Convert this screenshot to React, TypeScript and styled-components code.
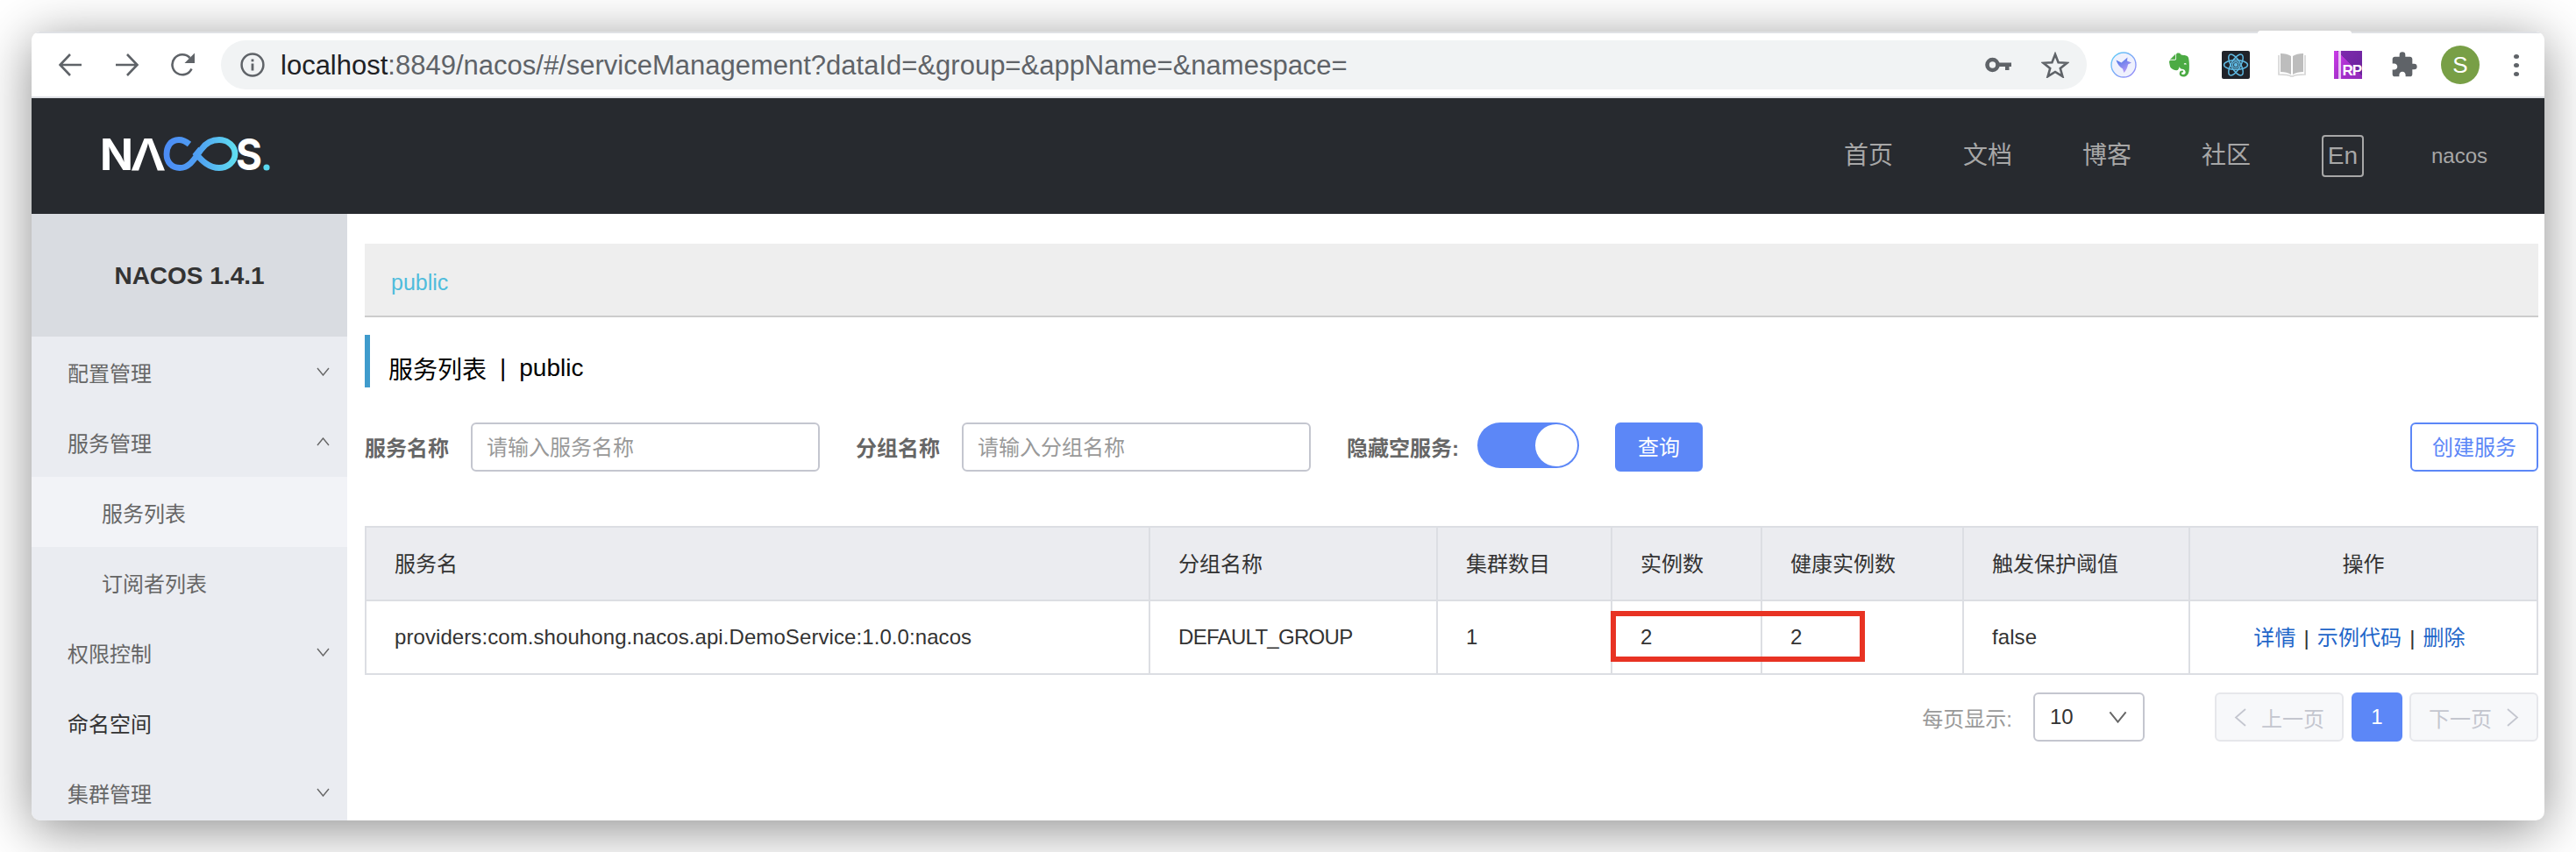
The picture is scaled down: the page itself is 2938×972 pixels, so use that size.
import styled, { createGlobalStyle } from "styled-components";
import { MdExtension } from "react-icons/md";
import { SiEvernote } from "react-icons/si";

const GlobalStyle = createGlobalStyle`
  html, body {
    margin: 0;
    padding: 0;
    background: #fff;
    overflow: hidden;
  }
  * {
    box-sizing: border-box;
  }
`;

const FONT = `"Liberation Sans", "Noto Sans CJK SC", sans-serif`;

const Page = styled.div`
  width: 2938px;
  height: 972px;
  padding: 36px;
  font-family: ${FONT};
  font-size: 24px;
  color: #333;
`;

const Window = styled.div`
  position: relative;
  height: 900px;
  display: flex;
  flex-direction: column;
  background: #fff;
  border-radius: 10px;
  box-shadow: 0 10px 60px rgba(0, 0, 0, 0.45);
`;

const WindowInner = styled.div`
  display: flex;
  flex-direction: column;
  height: 100%;
  border-radius: 10px;
  overflow: hidden;
`;

/* browser chrome */
const BrowserBar = styled.div`
  flex: none;
  height: 76px;
  display: flex;
  align-items: center;
  background: #fff;
  border-top: 2px solid #dfe1e5;
  border-bottom: 2px solid #dfe1e5;
  padding-left: 31px;
`;

const TopNotch = styled.div`
  position: absolute;
  top: -1px;
  left: 2539px;
  width: 107px;
  height: 3px;
  background: #fff;
  border-radius: 3px 3px 0 0;
`;

const NavIcon = styled.svg`
  flex: none;
  width: 28px;
  height: 28px;
  margin-right: 36px;
  fill: none;
  stroke: #5f6368;
  stroke-width: 2.6;
`;

const UrlPill = styled.div`
  flex: none;
  width: 2128px;
  height: 56px;
  margin-left: -7px;
  display: flex;
  align-items: center;
  background: #f1f3f4;
  border-radius: 28px;
  padding: 0 20px 0 22px;
`;

const UrlIcon = styled.svg`
  flex: none;
  width: 28px;
  height: 28px;
  margin-right: 18px;
`;

const UrlText = styled.div`
  flex: 1;
  font-size: 31px;
  color: #5f6368;
  white-space: nowrap;
  padding-top: 2px;
  b {
    font-weight: 400;
    color: #202124;
  }
`;

const KeyIcon = styled.svg`
  flex: none;
  width: 30px;
  height: 18px;
  margin-right: 34px;
`;

const StarIcon = styled.svg`
  flex: none;
  width: 32px;
  height: 30px;
`;

const ExtRow = styled.div`
  flex: 1;
  display: flex;
  align-items: center;
  padding-left: 27px;
`;

const ExtSlot = styled.div<{ $w?: number; $mr?: number }>`
  flex: none;
  width: ${(p) => p.$w ?? 32}px;
  height: 32px;
  margin-right: ${(p) => p.$mr ?? 32}px;
  display: flex;
  align-items: center;
  justify-content: center;
`;

const ReactTile = styled.svg`
  flex: none;
  width: 32px;
  height: 32px;
  border-radius: 2px;
  background: #20232a;
`;

const AxureTile = styled.div`
  position: relative;
  width: 32px;
  height: 32px;
  background:
    linear-gradient(45deg, transparent 55%, rgba(70, 30, 130, 0.55) 55%),
    linear-gradient(135deg, #c93be6 0%, #a52fca 60%, #8f2ab8 100%);
  color: #fff;
  font-size: 17px;
  font-weight: 700;
  letter-spacing: -1px;
  display: flex;
  align-items: flex-end;
  justify-content: flex-end;
  padding: 0 1px 1px 0;
  line-height: 16px;
  &::before {
    content: "";
    position: absolute;
    left: 5px;
    top: 0;
    bottom: 0;
    width: 3px;
    background: #e9c6f2;
  }
`;

const Avatar = styled.div`
  flex: none;
  width: 44px;
  height: 44px;
  border-radius: 50%;
  background: #789f46;
  color: #fff;
  font-size: 26px;
  display: flex;
  align-items: center;
  justify-content: center;
  margin-right: 39px;
`;

const MoreDots = styled.div`
  flex: none;
  display: flex;
  flex-direction: column;
  gap: 5px;
  i {
    display: block;
    width: 6px;
    height: 5px;
    border-radius: 50%;
    background: #5f6368;
  }
`;

/* nacos top nav */
const TopHeader = styled.div`
  flex: none;
  height: 132px;
  display: flex;
  align-items: center;
  background: #272a2f;
  padding-left: 72px;
`;

const LogoSvg = styled.svg`
  flex: none;
  width: 208px;
  height: 72px;
  margin-top: -4px;
`;

const TopNav = styled.div`
  margin-left: auto;
  display: flex;
  align-items: center;
  color: #a7a7a7;
  font-size: 28px;
  padding-right: 65px;
`;

const TopLink = styled.span`
  margin-right: 80px;
  line-height: 40px;
`;

const LangBox = styled.span`
  width: 48px;
  height: 48px;
  border: 2px solid #a7a7a7;
  border-radius: 4px;
  display: flex;
  align-items: center;
  justify-content: center;
  margin-right: 77px;
  margin-left: 1px;
`;

const UserName = styled.span`
  font-size: 24px;
`;

/* page body */
const Body = styled.div`
  flex: 1;
  min-height: 0;
  display: flex;
`;

const Sidebar = styled.div`
  flex: none;
  width: 360px;
  background: #eaecf1;
  overflow: hidden;
`;

const SidebarTitle = styled.div`
  height: 140px;
  background: #d9dce1;
  display: flex;
  align-items: center;
  justify-content: center;
  padding-top: 2px;
  font-size: 28px;
  font-weight: 700;
  color: #333;
`;

const MenuItem = styled.div<{ $sub?: boolean; $active?: boolean; $dark?: boolean }>`
  height: 80px;
  flex: none;
  display: flex;
  align-items: center;
  justify-content: space-between;
  padding-left: ${(p) => (p.$sub ? 80 : 41)}px;
  padding-right: 20px;
  background: ${(p) => (p.$active ? "#f2f3f7" : "transparent")};
  color: ${(p) => (p.$dark ? "#333" : "#666")};
`;

const Chevron = styled.svg<{ $w?: number; $h?: number; $sw?: number }>`
  flex: none;
  width: ${(p) => p.$w ?? 15}px;
  height: ${(p) => p.$h ?? 10}px;
  fill: none;
  stroke: ${(p) => p.color ?? "#666"};
  stroke-width: ${(p) => p.$sw ?? 1.4};
`;

const Content = styled.div`
  flex: 1;
  min-width: 0;
  padding: 34px 7px 0 20px;
`;

const Breadcrumb = styled.div`
  height: 84px;
  background: #eee;
  border-bottom: 2px solid #ccc;
  display: flex;
  align-items: center;
  padding: 6px 0 0 30px;
  color: #4fbcdc;
  font-size: 25px;
`;

const PageTitle = styled.div`
  margin-top: 20px;
  height: 60px;
  border-left: 6px solid #3f9bcc;
  display: flex;
  align-items: center;
  padding: 16px 0 0 21px;
  color: #000;
  font-size: 28px;
  span {
    margin: 0 15px;
  }
`;

const FilterRow = styled.div`
  margin-top: 40px;
  height: 56px;
  display: flex;
  align-items: center;
`;

const FilterLabel = styled.label<{ $gap?: number }>`
  flex: none;
  font-weight: 700;
  color: #666;
  padding-bottom: 2px;
  margin-right: ${(p) => p.$gap ?? 25}px;
`;

const SearchInput = styled.div`
  flex: none;
  width: 398px;
  height: 56px;
  margin-right: 41px;
  border: 2px solid #c4c6cf;
  border-radius: 6px;
  display: flex;
  align-items: center;
  padding: 0 0 4px 16px;
  color: #999;
`;

const Toggle = styled.div`
  flex: none;
  width: 116px;
  height: 52px;
  margin: -4px 41px 0 0;
  border-radius: 26px;
  background: #5c87f7;
  display: flex;
  justify-content: flex-end;
  padding: 2px;
  i {
    display: block;
    width: 48px;
    height: 48px;
    border-radius: 50%;
    background: #fff;
  }
`;

const Button = styled.button<{ $outline?: boolean }>`
  flex: none;
  height: 56px;
  width: ${(p) => (p.$outline ? 146 : 100)}px;
  margin-left: ${(p) => (p.$outline ? "auto" : 0)};
  border: 2px solid #5c87f7;
  border-radius: 6px;
  background: ${(p) => (p.$outline ? "#fff" : "#5c87f7")};
  color: ${(p) => (p.$outline ? "#5c87f7" : "#fff")};
  font-family: ${FONT};
  font-size: 24px;
  padding: 0 0 3px;
`;

const TableWrap = styled.div`
  position: relative;
  margin-top: 62px;
`;

const Table = styled.table`
  width: 2479px;
  table-layout: fixed;
  border-collapse: separate;
  border-spacing: 0;
  border-top: 2px solid #dcdee3;
  border-left: 2px solid #dcdee3;
`;

const Th = styled.th<{ $center?: boolean }>`
  height: 84px;
  background: #ebecf0;
  border-right: 2px solid #dcdee3;
  border-bottom: 2px solid #dcdee3;
  padding: 0 0 3px ${(p) => (p.$center ? 0 : 32)}px;
  font-weight: 400;
  text-align: ${(p) => (p.$center ? "center" : "left")};
  color: #333;
`;

const Td = styled.td<{ $center?: boolean }>`
  height: 84px;
  background: #fff;
  border-right: 2px solid #dcdee3;
  border-bottom: 2px solid #dcdee3;
  padding: ${(p) => (p.$center ? "0 9px 4px 0" : "0 0 0 32px")};
  text-align: ${(p) => (p.$center ? "center" : "left")};
  white-space: nowrap;
  letter-spacing: 0.08px;
  color: #333;
`;

const GroupCell = styled(Td)`
  letter-spacing: -0.7px;
`;

const ActionLink = styled.a`
  color: #1f66c9;
`;

const ActionSep = styled.span`
  margin: 0 9px;
`;

const Highlight = styled.div`
  position: absolute;
  left: 1421px;
  top: 97px;
  width: 290px;
  height: 58px;
  border: 6px solid #e83323;
  pointer-events: none;
`;

const Pagination = styled.div`
  margin-top: 20px;
  height: 56px;
  display: flex;
  align-items: center;
  justify-content: flex-end;
`;

const PageSizeLabel = styled.span`
  color: #999;
  margin-right: 24px;
`;

const PageSelect = styled.div`
  width: 127px;
  height: 56px;
  border: 2px solid #c4c6cf;
  border-radius: 6px;
  display: flex;
  align-items: center;
  justify-content: space-between;
  padding: 0 18px 0 17px;
  margin-right: 80px;
`;

const PagerButton = styled.div<{ $current?: boolean }>`
  height: 56px;
  width: ${(p) => (p.$current ? 58 : 147)}px;
  margin-left: ${(p) => (p.$current ? 9 : 0)}px;
  margin-right: ${(p) => (p.$current ? 8 : 0)}px;
  border: 2px solid ${(p) => (p.$current ? "#5c87f7" : "#e6e7eb")};
  border-radius: 6px;
  background: ${(p) => (p.$current ? "#5c87f7" : "#f7f8fa")};
  color: ${(p) => (p.$current ? "#fff" : "#c4c6cf")};
  display: flex;
  align-items: center;
  justify-content: center;
  gap: 17px;
`;

const down = "M1 1 L7.5 9 L14 1";
const up = "M1 9 L7.5 1 L14 9";

const NacosLogo = () => (
  <LogoSvg viewBox="-8 -16 208 72">
    <defs>
      <linearGradient id="loop" x1="0" x2="1" y1="0" y2="0">
        <stop offset="0" stopColor="#4c8cf5" />
        <stop offset="0.45" stopColor="#4f9ff2" />
        <stop offset="1" stopColor="#5fdcf0" />
      </linearGradient>
    </defs>
    <text x="-2" y="38" fontFamily="Inter" fontWeight="700" fontSize="49" fill="#fff" textLength="38" lengthAdjust="spacingAndGlyphs">
      N
    </text>
    <text x="34" y="38" fontFamily="Noto Sans" fontWeight="600" fontSize="50" fill="#fff" textLength="38" lengthAdjust="spacingAndGlyphs">
      Λ
    </text>
    <path
      d="M100 8.5 C95 4.5 91 3.5 88 3.5 C78 3.5 74 12 74 20 C74 29 80 35.5 89 35.5 C101 35.5 107 23 114 14 C119 7 126 3.5 134 3.5 C144 3.5 152 11 152 19.5 C152 28 144 35.5 134 35.5 C122 35.5 114 27 108 20 L113 14"
      fill="none"
      stroke="url(#loop)"
      strokeWidth="6.8"
      strokeLinecap="butt"
    />
    <text x="153" y="38" fontFamily="Inter" fontWeight="700" fontSize="49" fill="#fff" textLength="30" lengthAdjust="spacingAndGlyphs">
      S
    </text>
    <circle cx="188" cy="35" r="3.6" fill="#5bd8ee" />
  </LogoSvg>
);

const BirdIcon = () => (
  <svg width="30" height="30" viewBox="0 0 30 30">
    <defs>
      <linearGradient id="birdRing" x1="0" x2="1" y1="0" y2="1">
        <stop offset="0" stopColor="#5fd0f8" />
        <stop offset="1" stopColor="#9a86f7" />
      </linearGradient>
      <linearGradient id="birdBody" x1="0" x2="0.6" y1="0" y2="1">
        <stop offset="0" stopColor="#3f72e4" />
        <stop offset="1" stopColor="#b79af7" />
      </linearGradient>
    </defs>
    <circle cx="15" cy="15" r="14" fill="#eff1fd" stroke="url(#birdRing)" strokeWidth="1.4" />
    <path d="M6.5 9.5 L12.5 12.5 L19.5 6.5 L19 10.5 L24 12.5 L20 14.5 C19.5 18 18 21 15.5 24 L14 19.5 C10.5 17.5 8 14 6.5 9.5 Z" fill="url(#birdBody)" />
  </svg>
);

const ReactLogo = () => (
  <ReactTile viewBox="0 0 32 32">
    <g fill="none" stroke="#5fb9e2" strokeWidth="1.5">
      <ellipse cx="16" cy="16" rx="13.5" ry="5.4" />
      <ellipse cx="16" cy="16" rx="13.5" ry="5.4" transform="rotate(60 16 16)" />
      <ellipse cx="16" cy="16" rx="13.5" ry="5.4" transform="rotate(120 16 16)" />
      <circle cx="16" cy="16" r="3.6" />
    </g>
    <circle cx="16" cy="16" r="2.2" fill="#5fb9e2" />
  </ReactTile>
);

const BookIcon = () => (
  <svg width="32" height="28" viewBox="0 0 32 28">
    <path d="M3 1 C8 1 12 2 15 4 L15 25 C12 23 8 22 3 22 Z" fill="#bdbdbd" />
    <path d="M29 1 C24 1 20 2 17 4 L17 25 C20 23 24 22 29 22 Z" fill="#bdbdbd" />
    <path d="M1 3 V25 C7 25 12 25 15 27 H17 C20 25 25 25 31 25 V3" fill="none" stroke="#d4d4d4" strokeWidth="1.6" />
  </svg>
);

const App = () => {
  return (
    <>
      <GlobalStyle />
      <Page>
        <Window>
          <WindowInner>
            <BrowserBar>
              <NavIcon viewBox="0 0 28 28">
                <path d="M26 14 H2 M13 2 L1.5 14 L13 26" />
              </NavIcon>
              <NavIcon viewBox="0 0 28 28">
                <path d="M1 14 H25 M14 2 L25.5 14 L14 26" />
              </NavIcon>
              <NavIcon viewBox="0 0 28 28">
                <path d="M23.5 18.5 A11.5 11.5 0 1 1 21.5 6" />
                <path d="M27 0.5 V12 H15.5 Z" fill="#5f6368" stroke="none" />
              </NavIcon>
              <UrlPill>
                <UrlIcon viewBox="0 0 28 28">
                  <circle cx="14" cy="14" r="12.4" fill="none" stroke="#5f6368" strokeWidth="2.5" />
                  <rect x="12.6" y="12.5" width="2.8" height="8" fill="#5f6368" />
                  <rect x="12.6" y="7.5" width="2.8" height="2.8" fill="#5f6368" />
                </UrlIcon>
                <UrlText>
                  <b>localhost</b>:8849/nacos/#/serviceManagement?dataId=&amp;group=&amp;appName=&amp;namespace=
                </UrlText>
                <KeyIcon viewBox="0 0 30 18">
                  <circle cx="8.5" cy="9" r="6" fill="none" stroke="#5f6368" strokeWidth="4.6" />
                  <path d="M14 6.5 H30 V11 H27.5 V15 H23 V11 H14 Z" fill="#5f6368" />
                </KeyIcon>
                <StarIcon viewBox="0 0 32 30">
                  <path d="M16 3 L19.6 12.2 L29.5 12.8 L21.8 19 L24.4 28.2 L16 23 L7.6 28.2 L10.2 19 L2.5 12.8 L12.4 12.2 Z" fill="none" stroke="#5f6368" strokeWidth="2.6" />
                </StarIcon>
              </UrlPill>
              <ExtRow>
                <ExtSlot $w={30} $mr={35}>
                  <BirdIcon />
                </ExtSlot>
                <ExtSlot $w={27} $mr={35}>
                  <SiEvernote size={34} color="#4cab44" />
                </ExtSlot>
                <ExtSlot $mr={32}>
                  <ReactLogo />
                </ExtSlot>
                <ExtSlot $mr={32}>
                  <BookIcon />
                </ExtSlot>
                <ExtSlot $mr={32}>
                  <AxureTile>RP</AxureTile>
                </ExtSlot>
                <ExtSlot $mr={26}>
                  <MdExtension size={36} color="#5f6368" />
                </ExtSlot>
                <Avatar>S</Avatar>
                <MoreDots>
                  <i />
                  <i />
                  <i />
                </MoreDots>
              </ExtRow>
            </BrowserBar>
            <TopHeader>
              <NacosLogo />
              <TopNav>
                <TopLink>首页</TopLink>
                <TopLink>文档</TopLink>
                <TopLink>博客</TopLink>
                <TopLink>社区</TopLink>
                <LangBox>En</LangBox>
                <UserName>nacos</UserName>
              </TopNav>
            </TopHeader>
            <Body>
              <Sidebar>
                <SidebarTitle>NACOS 1.4.1</SidebarTitle>
                <MenuItem>
                  配置管理
                  <Chevron viewBox="0 0 15 10">
                    <path d={down} />
                  </Chevron>
                </MenuItem>
                <MenuItem>
                  服务管理
                  <Chevron viewBox="0 0 15 10">
                    <path d={up} />
                  </Chevron>
                </MenuItem>
                <MenuItem $sub $active>
                  服务列表
                </MenuItem>
                <MenuItem $sub>订阅者列表</MenuItem>
                <MenuItem>
                  权限控制
                  <Chevron viewBox="0 0 15 10">
                    <path d={down} />
                  </Chevron>
                </MenuItem>
                <MenuItem $dark>命名空间</MenuItem>
                <MenuItem>
                  集群管理
                  <Chevron viewBox="0 0 15 10">
                    <path d={down} />
                  </Chevron>
                </MenuItem>
              </Sidebar>
              <Content>
                <Breadcrumb>public</Breadcrumb>
                <PageTitle>
                  服务列表<span>|</span>public
                </PageTitle>
                <FilterRow>
                  <FilterLabel>服务名称</FilterLabel>
                  <SearchInput>请输入服务名称</SearchInput>
                  <FilterLabel>分组名称</FilterLabel>
                  <SearchInput>请输入分组名称</SearchInput>
                  <FilterLabel $gap={21}>隐藏空服务:</FilterLabel>
                  <Toggle>
                    <i />
                  </Toggle>
                  <Button>查询</Button>
                  <Button $outline>创建服务</Button>
                </FilterRow>
                <TableWrap>
                  <Table>
                    <colgroup>
                      <col style={{ width: 894 }} />
                      <col style={{ width: 328 }} />
                      <col style={{ width: 199 }} />
                      <col style={{ width: 171 }} />
                      <col style={{ width: 230 }} />
                      <col style={{ width: 258 }} />
                      <col style={{ width: 397 }} />
                    </colgroup>
                    <thead>
                      <tr>
                        <Th>服务名</Th>
                        <Th>分组名称</Th>
                        <Th>集群数目</Th>
                        <Th>实例数</Th>
                        <Th>健康实例数</Th>
                        <Th>触发保护阈值</Th>
                        <Th $center>操作</Th>
                      </tr>
                    </thead>
                    <tbody>
                      <tr>
                        <Td>providers:com.shouhong.nacos.api.DemoService:1.0.0:nacos</Td>
                        <GroupCell>DEFAULT_GROUP</GroupCell>
                        <Td>1</Td>
                        <Td>2</Td>
                        <Td>2</Td>
                        <Td>false</Td>
                        <Td $center>
                          <ActionLink>详情</ActionLink>
                          <ActionSep>|</ActionSep>
                          <ActionLink>示例代码</ActionLink>
                          <ActionSep>|</ActionSep>
                          <ActionLink>删除</ActionLink>
                        </Td>
                      </tr>
                    </tbody>
                  </Table>
                  <Highlight />
                </TableWrap>
                <Pagination>
                  <PageSizeLabel>每页显示:</PageSizeLabel>
                  <PageSelect>
                    10
                    <Chevron viewBox="0 0 15 10" $w={21} $h={14}>
                      <path d={down} />
                    </Chevron>
                  </PageSelect>
                  <PagerButton>
                    <Chevron viewBox="0 0 14 21" $w={14} $h={21} $sw={1.8} color="#c4c6cf">
                      <path d="M13 1 L2 10.5 L13 20" />
                    </Chevron>
                    上一页
                  </PagerButton>
                  <PagerButton $current>1</PagerButton>
                  <PagerButton>
                    下一页
                    <Chevron viewBox="0 0 14 21" $w={14} $h={21} $sw={1.8} color="#c4c6cf">
                      <path d="M1 1 L12 10.5 L1 20" />
                    </Chevron>
                  </PagerButton>
                </Pagination>
              </Content>
            </Body>
          </WindowInner>
          <TopNotch />
        </Window>
      </Page>
    </>
  );
};

export default App;
